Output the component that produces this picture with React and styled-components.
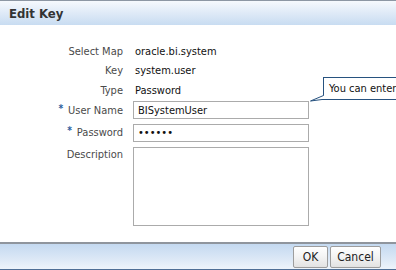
import React from 'react';
import styled, { createGlobalStyle } from 'styled-components';

const GlobalStyle = createGlobalStyle`
  html, body {
    margin: 0;
    padding: 0;
    background: #ffffff;
    overflow: hidden;
  }
`;

const font = `"DejaVu Sans Condensed", "Liberation Sans", sans-serif`;

const Dialog = styled.div`
  position: relative;
  width: 396px;
  height: 270px;
  display: flex;
  flex-direction: column;
  font-family: ${font};
  font-size: 11px;
  overflow: hidden;
`;

const TitleBar = styled.div`
  height: 24px;
  border-top: 1px solid #8d97a4;
  padding-left: 9px;
  display: flex;
  align-items: center;
  background: linear-gradient(to bottom, #f6f9fd 0%, #dfeaf7 50%, #c8dcf1 100%);
  color: #333333;
  font-size: 13px;
  font-weight: bold;
`;

const Body = styled.div`
  flex: 1;
  padding-top: 17px;
`;

const Form = styled.div`
  display: grid;
  grid-template-columns: 123px 176px;
  column-gap: 10px;
`;

const Label = styled.div`
  height: ${(p) => p.h}px;
  display: flex;
  align-items: ${(p) => (p.top ? 'flex-start' : 'center')};
  justify-content: flex-end;
  padding-top: ${(p) => (p.top ? 3 : 0)}px;
  box-sizing: border-box;
  color: #4a4a4a;
  white-space: nowrap;
`;

const Required = styled.span`
  color: #2a5d9c;
  font-weight: bold;
  font-size: 10px;
  margin-right: 5px;
  position: relative;
  top: -2px;
`;

const Value = styled.div`
  height: ${(p) => p.h}px;
  display: flex;
  align-items: center;
  padding-left: 2px;
  color: #111111;
  white-space: nowrap;
`;

const Cell = styled.div`
  height: ${(p) => p.h}px;
  display: flex;
  align-items: ${(p) => (p.top ? 'flex-start' : 'center')};
  padding-top: ${(p) => (p.top ? 2 : 0)}px;
  box-sizing: border-box;
`;

const Field = styled.input`
  width: 176px;
  height: 18px;
  box-sizing: border-box;
  border: 1px solid #ababab;
  padding: 0 4px;
  font-family: ${font};
  font-size: 11px;
  color: #111111;
  outline: none;
  background: #ffffff;
`;

const Area = styled.textarea`
  width: 176px;
  height: 79px;
  box-sizing: border-box;
  border: 1px solid #ababab;
  resize: none;
  outline: none;
  margin: 0;
`;

const Footer = styled.div`
  height: 25px;
  border-top: 2px solid #8f959d;
  border-bottom: 1px solid #4f6f96;
  background: linear-gradient(to bottom, #c4d9f0 0%, #dce8f6 60%, #eef4fb 100%);
  display: flex;
  align-items: center;
  justify-content: flex-end;
  gap: 2px;
  padding-right: 15px;
`;

const Button = styled.button`
  height: 22px;
  width: ${(p) => p.w}px;
  box-sizing: border-box;
  border: 1px solid #9d9d9d;
  border-radius: 2px;
  background: linear-gradient(to bottom, #ffffff 0%, #f3f3f3 50%, #e2e2e2 100%);
  font-family: ${font};
  font-size: 12px;
  color: #222222;
  padding: 0;
`;

const Tip = styled.div`
  position: absolute;
  left: 323px;
  top: 77px;
  width: 110px;
  height: 22px;
  box-sizing: border-box;
  border: 1px solid #27527f;
  border-bottom: none;
  background: #ffffff;
  padding-left: 5px;
  display: flex;
  align-items: center;
  color: #111111;
  font-size: 11px;
  white-space: nowrap;
`;

const TipTail = styled.svg`
  position: absolute;
  left: -14px;
  top: 16px;
  overflow: visible;
`;

const rows = [
  { label: 'Select Map', value: 'oracle.bi.system', h: 19 },
  { label: 'Key', value: 'system.user', h: 19 },
  { label: 'Type', value: 'Password', h: 20 },
];

export default function App() {
  return (
    <>
      <GlobalStyle />
      <Dialog>
        <TitleBar>Edit Key</TitleBar>
        <Body>
          <Form>
            {rows.map((r) => (
              <React.Fragment key={r.label}>
                <Label h={r.h}>{r.label}</Label>
                <Value h={r.h}>{r.value}</Value>
              </React.Fragment>
            ))}
            <Label h={20}>
              <Required>*</Required>User Name
            </Label>
            <Cell h={20}>
              <Field readOnly value="BISystemUser" />
            </Cell>
            <Label h={25}>
              <Required>*</Required>Password
            </Label>
            <Cell h={25}>
              <Field readOnly type="password" value="secret" />
            </Cell>
            <Label h={82} top>Description</Label>
            <Cell h={82} top>
              <Area readOnly />
            </Cell>
          </Form>
        </Body>
        <Footer>
          <Button w={35}>OK</Button>
          <Button w={51}>Cancel</Button>
        </Footer>
        <Tip>
          You can enter
          <TipTail width="120" height="8">
            <path d="M13.5 0 V1.5 L0.5 7 L12 5.5 H130" fill="#ffffff" stroke="#27527f" strokeWidth="1" />
          </TipTail>
        </Tip>
      </Dialog>
    </>
  );
}
